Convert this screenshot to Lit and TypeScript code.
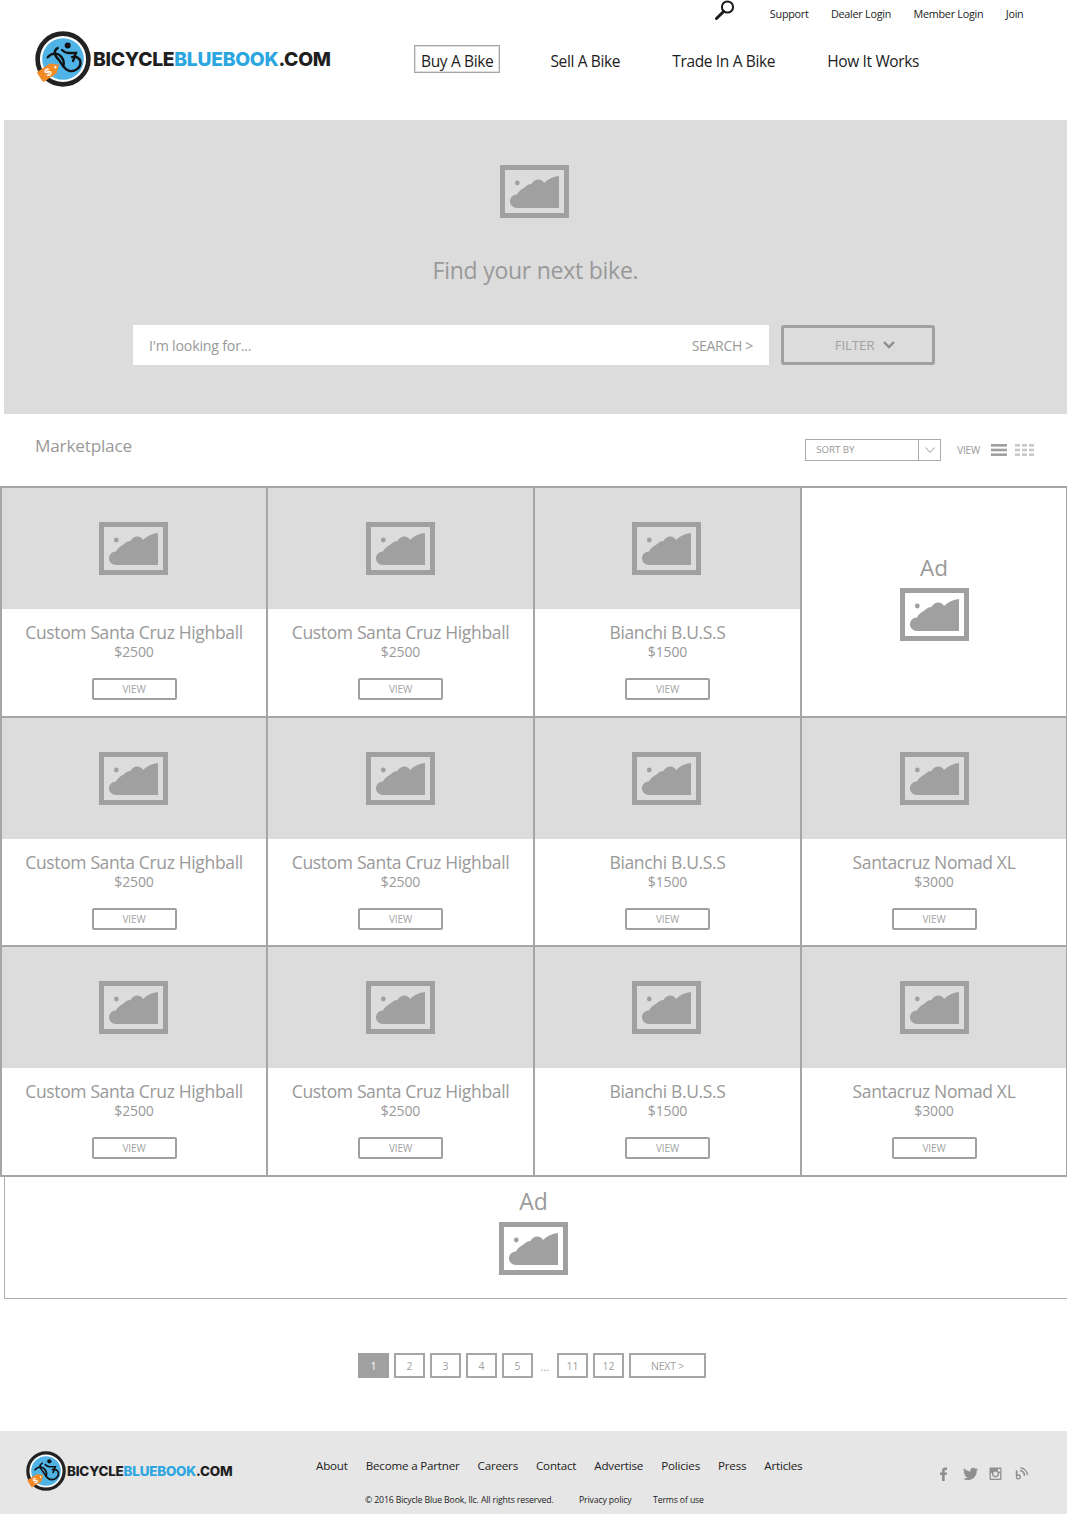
import { LitElement, html, css, svg } from "lit";
import { customElement } from "lit/decorators.js";

const photo = () => html`<svg class="photo" viewBox="0 0 69 53" width="69" height="53" aria-hidden="true">
  <path fill-rule="evenodd" d="M0 0H69V53H0ZM5 5V48H64V5Z"/>
  <circle cx="17.3" cy="18" r="2.4"/>
  <path d="M59 11V43H17C13 43 10 40 10 36.5C10 32.5 13 29.5 17 29.5C18 27 21 24 24.5 22.5C27 20 29 19 31.5 19C33 16 35.5 14.5 38 14.5C41 14.5 43 16 44 18C48 14 53 11.5 59 11Z"/>
</svg>`;

const mark = () => html`<svg class="mark" viewBox="-28 -28 56 56" aria-hidden="true">
  <circle r="25.4" fill="#fff" stroke="#222" stroke-width="4.6"/>
  <circle r="20.8" fill="#4fb3e6"/>
  <g fill="none" stroke="#111" stroke-width="2.3" stroke-linecap="round">
    <path d="M-15.300 -1.700C-11 -6.500 -5 -6.500 -1.500 -2C1 1.500 1.300 4.500 .3 7.300"/>
    <path d="M-5.300 -11C-10 -8 -9 -4 -4 1C-1 5 1 11 7 12C13 12.500 18 8 17.500 3C17 -1 13 -3 9 -2"/>
    <path d="M-1 -9C1 -7 3 -6 5 -6L13 -6L10 2"/>
  </g>
  <circle cx="4.700" cy="-13.500" r="3" fill="#111"/>
  <g transform="translate(-13.500 12) rotate(-33)">
    <path d="M-10 -6H4.500L11.500 0L4.500 6H-10Q-11.500 6 -11.500 4.500V-4.500Q-11.500 -6 -10 -6Z" fill="#f28a26"/>
    <circle cx="7" cy="0" r="1.200" fill="#fff"/>
    <text x="-2" y="4" text-anchor="middle" font-family="Liberation Sans, sans-serif" font-weight="700" font-size="11" fill="#fff">$</text>
  </g>
</svg>`;

const icons = {
  search: svg`<circle cx="13.5" cy="7" r="5.6" fill="none" stroke="#1a1a1a" stroke-width="2"/><path d="M9.6 11.5L2.5 18.5" stroke="#1a1a1a" stroke-width="3" stroke-linecap="round"/>`,
  fb: svg`<path d="M5 14V8H3V5.6H5V3.8C5 1.6 6.3.5 8.2.5H10V3H8.8C8 3 7.7 3.4 7.7 4.1V5.6H10L9.7 8H7.7V14Z"/>`,
  tw: svg`<path d="M15 2.2C14.4 2.5 13.8 2.6 13.2 2.7C13.9 2.3 14.4 1.7 14.6.9C14 1.3 13.3 1.5 12.6 1.7C11.4.4 9.4.4 8.2 1.6C7.4 2.4 7.1 3.4 7.4 4.5C4.9 4.4 2.6 3.2 1 1.2C.2 2.6.6 4.4 2 5.3C1.5 5.3 1 5.2.6 4.9C.6 6.4 1.7 7.7 3.1 8C2.7 8.1 2.2 8.1 1.7 8C2.1 9.3 3.3 10.2 4.7 10.2C3.3 11.3 1.6 11.8-.1 11.6C3.2 13.7 7.6 13.4 10.6 10.9C12.8 9 14 6.2 13.6 3.7C14.2 3.3 14.7 2.8 15 2.2Z"/>`,
  ig: svg`<path fill-rule="evenodd" d="M2 .5H11C12 .5 12.5 1 12.5 2V11.500C12.500 12.500 12 13 11 13H2C1 13 .5 12.500 .5 11.500V2C.5 1 1 .5 2 .5ZM9 2V4.500H11.300V2ZM1.800 6V11.200C1.800 11.500 2 11.700 2.300 11.700H10.700C11 11.700 11.200 11.500 11.200 11.200V6H10C10.500 8.500 8.700 10.300 6.500 10.300C4.300 10.300 2.500 8.500 3 6ZM6.500 4.600A2.200 2.200 0 1 0 6.500 9A2.200 2.200 0 1 0 6.500 4.600Z"/>`,
  blog: svg`<path d="M.8 3.500H2.600V7.500A2.600 2.600 0 1 1 .8 10ZM3.400 11.300A1.200 1.200 0 1 0 3.300 8.800A1.200 1.200 0 0 0 3.400 11.300Z" fill-rule="evenodd"/><path d="M5 3.500A5.500 5.500 0 0 1 9.500 9" fill="none" stroke="currentColor" stroke-width="1.400"/><path d="M5.500.8A8 8 0 0 1 12.500 8" fill="none" stroke="currentColor" stroke-width="1.400"/>`,
};

const NAMES = {
  c: ["Custom Santa Cruz Highball", "$2500"],
  b: ["Bianchi B.U.S.S", "$1500"],
  s: ["Santacruz Nomad XL", "$3000"],
};
const CELLS = ["c", "c", "b", "ad", "c", "c", "b", "s", "c", "c", "b", "s"] as const;

@customElement("app-root")
export class AppRoot extends LitElement {
  static styles = css`
    :host { display: block; width: 1067px; height: 1514px; overflow: hidden; background: #fff; font-family: "Open Sans", "Liberation Sans", sans-serif; color: #999; }
    * { box-sizing: border-box; }
    a { color: inherit; text-decoration: none; }
    .photo { display: block; fill: #a0a0a0; flex: none; }

    .logo { display: flex; align-items: center; }
    .mark { display: block; flex: none; }
    .word { font-family: Inter, "Liberation Sans", sans-serif; font-weight: 800; color: #1f1f1f; white-space: nowrap; }
    .word b { font-weight: 800; color: #2ba6e0; }

    header { height: 120px; display: flex; align-items: flex-start; padding-left: 35px; }
    header .logo { margin-top: 31px; width: 296px; flex: none; gap: 2px; }
    header .mark { width: 56px; height: 56px; }
    header .word { font-size: 19.3px; letter-spacing: -0.28px; margin-top: -1px; }
    .head-right { flex: 1; display: flex; flex-direction: column; }
    .utility { display: flex; justify-content: flex-end; align-items: center; gap: 22.3px; height: 26px; padding-right: 43.5px; font-size: 10.8px; letter-spacing: -0.25px; color: #222; }
    .utility svg { margin: -6px 12px 0 0; }
    .mainnav { display: flex; align-items: center; margin: 19px 0 0 83px; font-size: 15.5px; letter-spacing: -0.35px; color: #1c1c1c; }
    .mainnav a { padding: 2px 6px 0; height: 28px; line-height: 26px; margin-right: 44px; border: 1px solid transparent; white-space: nowrap; margin-left: -6px; }
    .mainnav a.on { border-color: #a6a6a6; box-shadow: inset 0 0 0 1px #e0e0e0; margin-left: 0; margin-right: 49px; }

    .hero { margin-left: 4px; height: 294px; background: #dcdcdc; display: flex; flex-direction: column; align-items: center; padding: 45px 2px 0 0; }
    .hero h1 { margin: 36px 0 0 2px; font-weight: 400; font-size: 23px; line-height: 32px; letter-spacing: -0.25px; color: #999; }
    .search { display: flex; gap: 12px; margin: 39px 0 0 -1px; width: 802px; }
    .input { width: 636px; height: 40px; background: #fff; display: flex; align-items: center; justify-content: space-between; padding: 0 16px; font-size: 14.2px; letter-spacing: -0.2px; color: #999; }
    .input span:last-child { font-size: 14px; letter-spacing: -0.3px; }
    .filter { width: 154px; height: 40px; border: 3px solid #a0a0a0; border-radius: 3px; display: flex; align-items: center; justify-content: center; gap: 9px; font-size: 13.5px; letter-spacing: -0.25px; color: #a3a3a3; padding-left: 14px; }

    .bar { height: 72px; display: flex; align-items: flex-start; padding: 0 33px 0 35px; }
    .bar h2 { margin: 19px 0 0; font-weight: 400; font-size: 17.2px; line-height: 26px; letter-spacing: -0.2px; color: #999; flex: 1; }
    .sort { margin-top: 25px; width: 136px; height: 22px; border: 1px solid #aaa; display: flex; font-size: 9.8px; letter-spacing: -0.1px; color: #999; }
    .sort span { flex: 1; padding-left: 10px; line-height: 20px; border-right: 1px solid #aaa; }
    .sort i { width: 21px; display: flex; align-items: center; justify-content: center; }
    .viewlabel { margin: 25px 0 0 16px; font-size: 10px; line-height: 22px; letter-spacing: -0.2px; }
    .v1 { display: block; margin: 30px 0 0 11px; }
    .v2 { display: block; margin: 30px 0 0 8px; }

    .grid { display: grid; grid-template-columns: 264px 265px 265px 264px; grid-template-rows: 228px 227px 228px; gap: 2px; padding: 2px 1px 2px 2px; background: #a6a6a6; }
    .cell { background: #fff; display: flex; flex-direction: column; align-items: center; min-width: 0; }
    .thumb { width: 100%; height: 121px; background: #dcdcdc; display: flex; align-items: center; justify-content: center; }
    .cell:nth-child(4n + 1) .thumb { padding-right: 1px; }
    .cell:nth-child(4n + 3) .thumb { padding-right: 3px; }
    .name { margin-top: 12px; font-size: 17.5px; line-height: 22px; letter-spacing: -0.35px; white-space: nowrap; color: #999; }
    .price { font-size: 14px; line-height: 17px; letter-spacing: -0.15px; color: #999; }
    .view { margin-top: 18px; width: 85px; height: 21.5px; border: 2px solid #a0a0a0; border-radius: 2px; text-align: center; font-size: 10px; line-height: 18px; letter-spacing: -0.1px; color: #a3a3a3; }
    .adlabel { font-size: 22.5px; line-height: 28px; color: #999; }
    .cell .adlabel { margin-top: 66px; }
    .adlabel + svg { margin-top: 6px; }

    .adbar { margin-left: 4px; height: 122px; border: solid #aeaeae; border-width: 0 0 1px 1px; display: flex; flex-direction: column; align-items: center; padding: 10px 5px 0 0; }
    .adbar .adlabel { font-size: 23px; margin-bottom: 1px; }

    .pages { display: flex; justify-content: center; gap: 5px; margin-top: 54px; height: 25px; padding-right: 3px; font-size: 10.5px; color: #a0a0a0; }
    .pages a { width: 31px; height: 25px; border: 2px solid #a6a6a6; display: flex; align-items: center; justify-content: center; }
    .pages a.cur { background: #a0a0a0; color: #fff; border-color: #a0a0a0; }
    .pages a.next { width: 77px; letter-spacing: -0.2px; }
    .pages span { width: 12px; text-align: center; line-height: 28px; margin: 0 1px; }

    footer { margin-top: 53px; height: 83px; background: #e6e6e6; display: flex; align-items: flex-start; padding-left: 26px; color: #222; }
    footer .logo { margin-top: 20px; width: 290px; flex: none; gap: 1px; }
    footer .mark { width: 40px; height: 40px; }
    footer .word { font-size: 13.4px; letter-spacing: -0.18px; }
    .foot-mid { width: 600px; flex: none; }
    .foot-links { display: flex; gap: 18px; margin-top: 26px; font-size: 11.6px; line-height: 18px; letter-spacing: -0.19px; white-space: nowrap; }
    .foot-legal { display: flex; margin: 18px 0 0 49px; font-size: 8.7px; line-height: 14px; letter-spacing: -0.13px; white-space: nowrap; }
    .foot-legal a:nth-child(1) { width: 214px; }
    .foot-legal a:nth-child(2) { width: 74px; }
    .social { display: flex; align-items: center; margin: 36px 0 0 21px; color: #8f8f8f; }
    .social svg { display: block; fill: currentColor; }
    .social a { display: block; width: 26px; }
  `;

  private cell(k: (typeof CELLS)[number]) {
    if (k === "ad") return html`<div class="cell"><div class="adlabel">Ad</div>${photo()}</div>`;
    const [n, p] = NAMES[k];
    return html`<div class="cell">
      <div class="thumb">${photo()}</div>
      <div class="name">${n}</div>
      <div class="price">${p}</div>
      <a class="view" href="#">VIEW</a>
    </div>`;
  }

  render() {
    const word = html`<span class="word">BICYCLE<b>BLUEBOOK</b>.COM</span>`;
    return html`
      <header>
        <a class="logo" href="#">${mark()}${word}</a>
        <div class="head-right">
          <nav class="utility">
            <svg width="22" height="20" viewBox="0 0 22 20" aria-hidden="true">${icons.search}</svg>
            <a href="#">Support</a><a href="#">Dealer Login</a><a href="#">Member Login</a><a href="#">Join</a>
          </nav>
          <nav class="mainnav">
            <a class="on" href="#">Buy A Bike</a><a href="#">Sell A Bike</a><a href="#">Trade In A Bike</a><a href="#">How It Works</a>
          </nav>
        </div>
      </header>

      <section class="hero">
        ${photo()}
        <h1>Find your next bike.</h1>
        <div class="search">
          <div class="input"><span>I'm looking for...</span><span>SEARCH &gt;</span></div>
          <div class="filter">FILTER
            <svg width="12" height="8" viewBox="0 0 12 8" aria-hidden="true"><path d="M1 1L6 6L11 1" fill="none" stroke="#8c8c8c" stroke-width="2.400"/></svg>
          </div>
        </div>
      </section>

      <div class="bar">
        <h2>Marketplace</h2>
        <div class="sort"><span>SORT BY</span><i><svg width="10" height="6" viewBox="0 0 10 6" aria-hidden="true"><path d="M.5.5L5 5.500L9.500.5" fill="none" stroke="#999" stroke-width="1"/></svg></i></div>
        <div class="viewlabel">VIEW</div>
        <svg class="v1" width="16" height="12" viewBox="0 0 16 12" fill="#a0a0a0" aria-hidden="true"><rect width="16" height="2.600"/><rect y="4.700" width="16" height="2.600"/><rect y="9.400" width="16" height="2.600"/></svg>
        <svg class="v2" width="19" height="12" viewBox="0 0 19 12" fill="#c8c8c8" aria-hidden="true">
          ${[0, 4.7, 9.4].map((y) => [0, 7, 14].map((x) => svg`<rect x=${x} y=${y} width="5" height="2.600"/>`))}
        </svg>
      </div>

      <div class="grid">${CELLS.map((k) => this.cell(k))}</div>

      <div class="adbar"><div class="adlabel">Ad</div>${photo()}</div>

      <nav class="pages">
        <a class="cur" href="#">1</a><a href="#">2</a><a href="#">3</a><a href="#">4</a><a href="#">5</a>
        <span>...</span>
        <a href="#">11</a><a href="#">12</a><a class="next" href="#">NEXT &gt;</a>
      </nav>

      <footer>
        <a class="logo" href="#">${mark()}${word}</a>
        <div class="foot-mid">
          <nav class="foot-links">
            <a href="#">About</a><a href="#">Become a Partner</a><a href="#">Careers</a><a href="#">Contact</a><a href="#">Advertise</a><a href="#">Policies</a><a href="#">Press</a><a href="#">Articles</a>
          </nav>
          <div class="foot-legal">
            <a href="#">© 2016 Bicycle Blue Book, llc.  All rights reserved.</a><a href="#">Privacy policy</a><a href="#">Terms of use</a>
          </div>
        </div>
        <div class="social">
          <a href="#"><svg width="13" height="14" viewBox="0 0 13 14">${icons.fb}</svg></a>
          <a href="#"><svg width="15" height="14" viewBox="0 0 15 14">${icons.tw}</svg></a>
          <a href="#"><svg width="13" height="14" viewBox="0 0 13 14">${icons.ig}</svg></a>
          <a href="#"><svg width="13" height="14" viewBox="0 0 13 14">${icons.blog}</svg></a>
        </div>
      </footer>
    `;
  }
}
